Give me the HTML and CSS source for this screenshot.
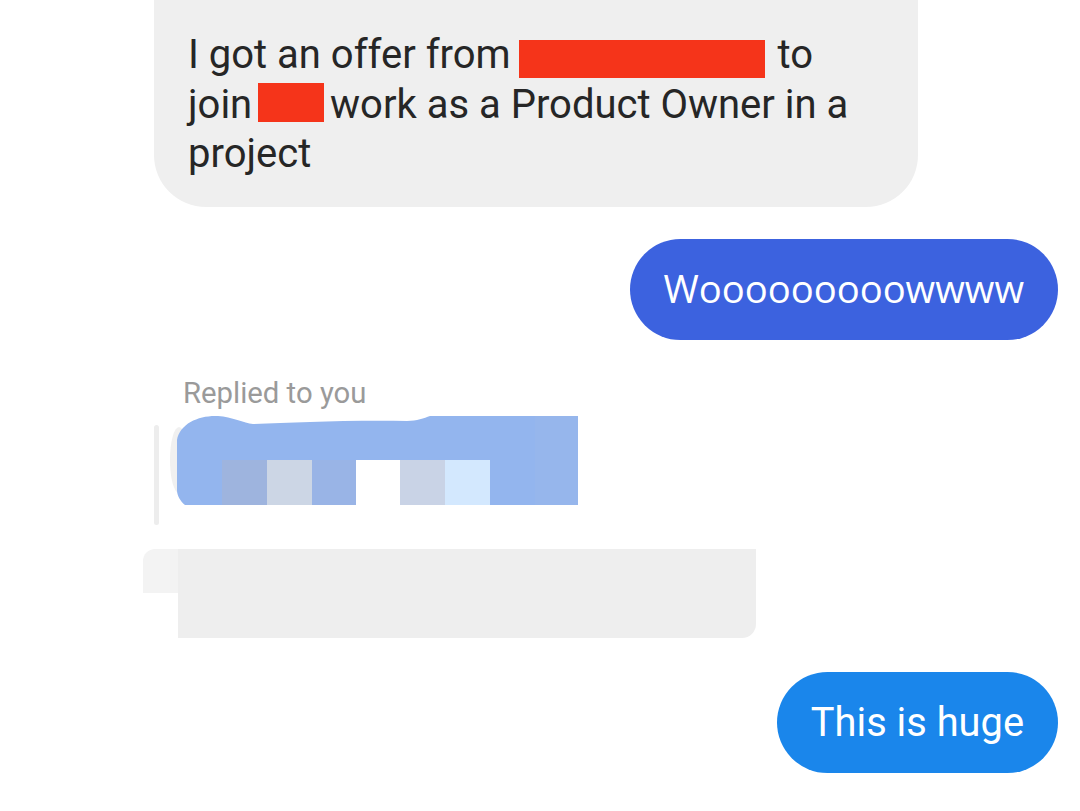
FILE: index.html
```html
<!DOCTYPE html>
<html lang="en">
<head>
    <meta charset="UTF-8">
    <meta name="viewport" content="width=device-width, initial-scale=1.0">
    <title>Messages</title>
    <link rel="stylesheet" href="styles.css">
</head>
<body>
    <main class="thread">
        <!-- Incoming message -->
        <div class="row row-in">
            <p class="bubble bubble-gray">
                <span class="line">I got an offer from <span class="redact redact-name"></span> to</span>
                <span class="line">join <span class="redact redact-short"></span> work as a Product Owner in a</span>
                <span class="line">project</span>
            </p>
        </div>

        <!-- Outgoing message -->
        <div class="row row-out">
            <p class="bubble bubble-indigo">Wooooooooowwww</p>
        </div>

        <!-- Reply -->
        <div class="reply">
            <div class="reply-label">Replied to you</div>
            <div class="reply-quote">
                <span class="quote-bar"></span>
                <svg class="quote-smudge" width="413" height="90" viewBox="0 0 413 90">
                    <ellipse cx="14" cy="45" rx="9" ry="33" fill="#f0f0f0"/>
                    <path d="M12 25 C15 8, 35 0, 53 1 C67 2, 79 8, 88 9 C127 8, 177 5, 242 6 C252 6, 259 3, 265 1 L413 1 L413 90 L20 90 C15 86, 12 80, 12 75 Z" fill="#93b5ee"/>
                    <rect x="57" y="45" width="45" height="45" fill="#9eb4de"/>
                    <rect x="102" y="45" width="45" height="45" fill="#ccd6e5"/>
                    <rect x="147" y="45" width="44" height="45" fill="#99b4e6"/>
                    <rect x="191" y="45" width="44" height="45" fill="#ffffff"/>
                    <rect x="235" y="45" width="45" height="45" fill="#c9d3e6"/>
                    <rect x="280" y="45" width="45" height="45" fill="#d3e8fe"/>
                    <rect x="370" y="1" width="43" height="89" fill="#96b6ec"/>
                </svg>
            </div>
            <div class="reply-body">
                <span class="body-tab"></span>
                <span class="body-block"></span>
            </div>
        </div>

        <!-- Outgoing message -->
        <div class="row row-out">
            <p class="bubble bubble-blue">This is huge</p>
        </div>
    </main>
</body>
</html>
```

FILE: styles.css
```css
body {
    margin: 0;
    padding: 0;
    background: #fff;
    font-family: Roboto, "Liberation Sans", sans-serif;
    color: #222;
}
.thread {
    width: 1080px;
    display: flex;
    flex-direction: column;
}
.row {
    display: flex;
}
.row-in {
    padding-left: 154px;
}
.row-out {
    justify-content: flex-end;
    padding-right: 22px;
}
.bubble {
    margin: 0;
}
.bubble-gray {
    width: 696px;
    padding: 30px 34px 28px;
    background: #efefef;
    border-radius: 0 0 52px 52px;
    font-size: 40px;
    line-height: 49.5px;
    color: #262626;
}
.line {
    display: block;
    white-space: nowrap;
}
.redact {
    display: inline-block;
    background: #f5341a;
}
.redact-name {
    width: 246px;
    height: 38px;
    margin-left: -2px;
    margin-right: 3px;
    vertical-align: -10px;
}
.redact-short {
    width: 66px;
    height: 39px;
    margin-left: -4px;
    margin-right: -4px;
    vertical-align: -4px;
}
.bubble-indigo {
    margin-top: 32px;
    height: 101px;
    padding: 0 34px;
    border-radius: 51px;
    background: #3c62df;
    color: #fff;
    font-family: "Open Sans", "Noto Sans", sans-serif;
    font-size: 38.2px;
    line-height: 98px;
}
.bubble-blue {
    margin-top: 34px;
    height: 101px;
    padding: 0 34px;
    border-radius: 51px;
    background: #1a86eb;
    color: #fff;
    font-size: 39.8px;
    line-height: 101px;
}
.reply {
    padding-left: 154px;
    margin-top: 36px;
}
.reply-label {
    padding-left: 29px;
    font-size: 29.3px;
    line-height: 34px;
    color: #9a9a9a;
}
.reply-quote {
    display: flex;
    align-items: flex-start;
    gap: 6px;
    margin-top: 5px;
}
.quote-bar {
    width: 5px;
    height: 100px;
    margin-top: 10px;
    border-radius: 3px;
    background: #ededed;
}
.quote-smudge {
    display: block;
}
.reply-body {
    display: flex;
    align-items: flex-start;
    margin-top: 24px;
    margin-left: -11px;
}
.body-tab {
    width: 35px;
    height: 44px;
    border-radius: 12px 0 0 0;
    background: #f3f3f3;
}
.body-block {
    width: 578px;
    height: 89px;
    border-radius: 0 0 14px 0;
    background: #eeeeee;
}
```
